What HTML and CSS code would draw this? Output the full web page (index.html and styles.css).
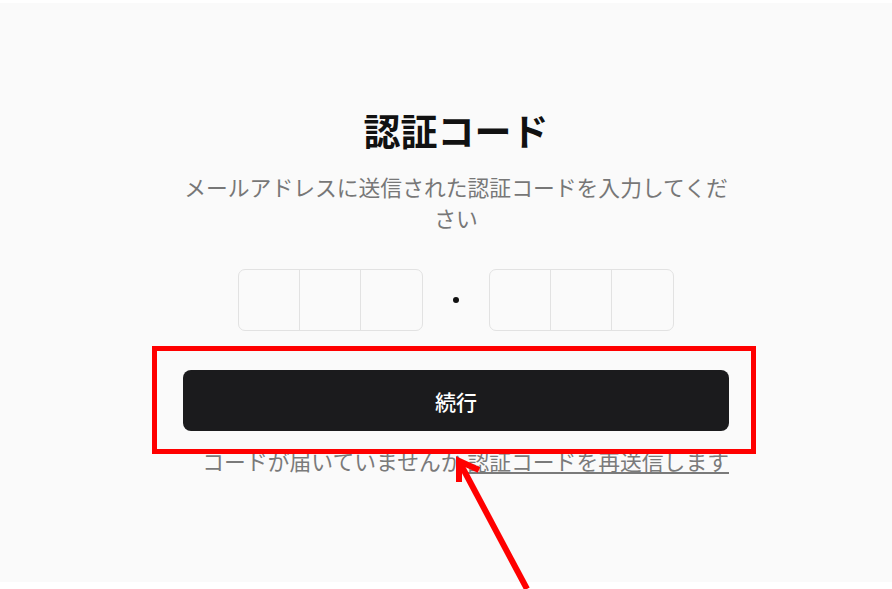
FILE: index.html
```html
<!DOCTYPE html>
<html lang="ja">
<head>
  <meta charset="UTF-8">
  <meta name="viewport" content="width=device-width, initial-scale=1.0">
  <title>認証コード</title>
  <link rel="stylesheet" href="styles.css">
</head>
<body>
  <div class="panel">
    <div class="verify">
      <h1 class="verify-title">認証コード</h1>
      <p class="verify-text">メールアドレスに送信された認証コードを入力してください</p>
      <div class="code-row">
        <div class="code-group">
          <input class="code-cell" type="text" maxlength="1">
          <input class="code-cell" type="text" maxlength="1">
          <input class="code-cell" type="text" maxlength="1">
        </div>
        <span class="code-dot"></span>
        <div class="code-group">
          <input class="code-cell" type="text" maxlength="1">
          <input class="code-cell" type="text" maxlength="1">
          <input class="code-cell" type="text" maxlength="1">
        </div>
      </div>
      <button class="continue-btn" type="button">続行</button>
      <p class="resend">コードが届いていませんか <a href="#">認証コードを再送信します</a></p>
    </div>
  </div>

  <!-- 注釈（赤枠と矢印） -->
  <div class="mark-box"></div>
  <svg class="mark-arrow" width="892" height="589" viewBox="0 0 892 589">
    <g stroke="#ff0000" stroke-width="6" stroke-linecap="butt" fill="none">
      <line x1="527" y1="589" x2="460" y2="463"/>
      <polyline points="459,482 459,461 479,470"/>
    </g>
  </svg>
</body>
</html>
```

FILE: styles.css
```css
/* 基本 */
* { margin: 0; padding: 0; box-sizing: border-box; }
body {
  background: #fff;
  font-family: "Noto Sans CJK JP", "Noto Sans", sans-serif;
  color: #111;
}
.panel {
  margin-top: 3px;
  height: 579px;
  background: #fafafa;
  padding-top: 103px;
  padding-left: 20px;
}
.verify {
  width: 546px;
  margin: 0 auto;
  text-align: center;
}
.verify-title {
  font-size: 37px;
  font-weight: 700;
  line-height: 49px;
  color: #111;
}
.verify-text {
  margin-top: 16px;
  font-size: 21.8px;
  line-height: 31px;
  color: #777;
}
.code-row {
  margin-top: 36px;
  display: flex;
  justify-content: center;
  align-items: center;
}
.code-group {
  display: flex;
  border: 1px solid #e2e2e2;
  border-radius: 7px;
  background: #fafafa;
  overflow: hidden;
}
.code-cell {
  width: 61px;
  height: 60px;
  border: none;
  border-right: 1px solid #e2e2e2;
  background: transparent;
  outline: none;
  text-align: center;
  font-size: 24px;
}
.code-cell:last-child { border-right: none; }
.code-dot {
  width: 6px;
  height: 6px;
  border-radius: 50%;
  background: #111;
  margin: 0 30px;
}
.continue-btn {
  display: block;
  width: 100%;
  height: 61px;
  margin-top: 39px;
  border: none;
  border-radius: 8px;
  background: #1b1b1d;
  color: #fff;
  font-family: inherit;
  font-size: 21px;
  font-weight: 500;
  cursor: pointer;
}
.resend {
  margin-top: 14px;
  font-size: 21.8px;
  line-height: 31px;
  color: #7a7a7a;
  text-align: right;
}
.resend a {
  color: #7a7a7a;
  text-decoration: underline;
}
/* 注釈 */
.mark-box {
  position: absolute;
  left: 152px;
  top: 346px;
  width: 604px;
  height: 108px;
  border: 5px solid #ff0000;
}
.mark-arrow {
  position: absolute;
  left: 0;
  top: 0;
  pointer-events: none;
}
```
